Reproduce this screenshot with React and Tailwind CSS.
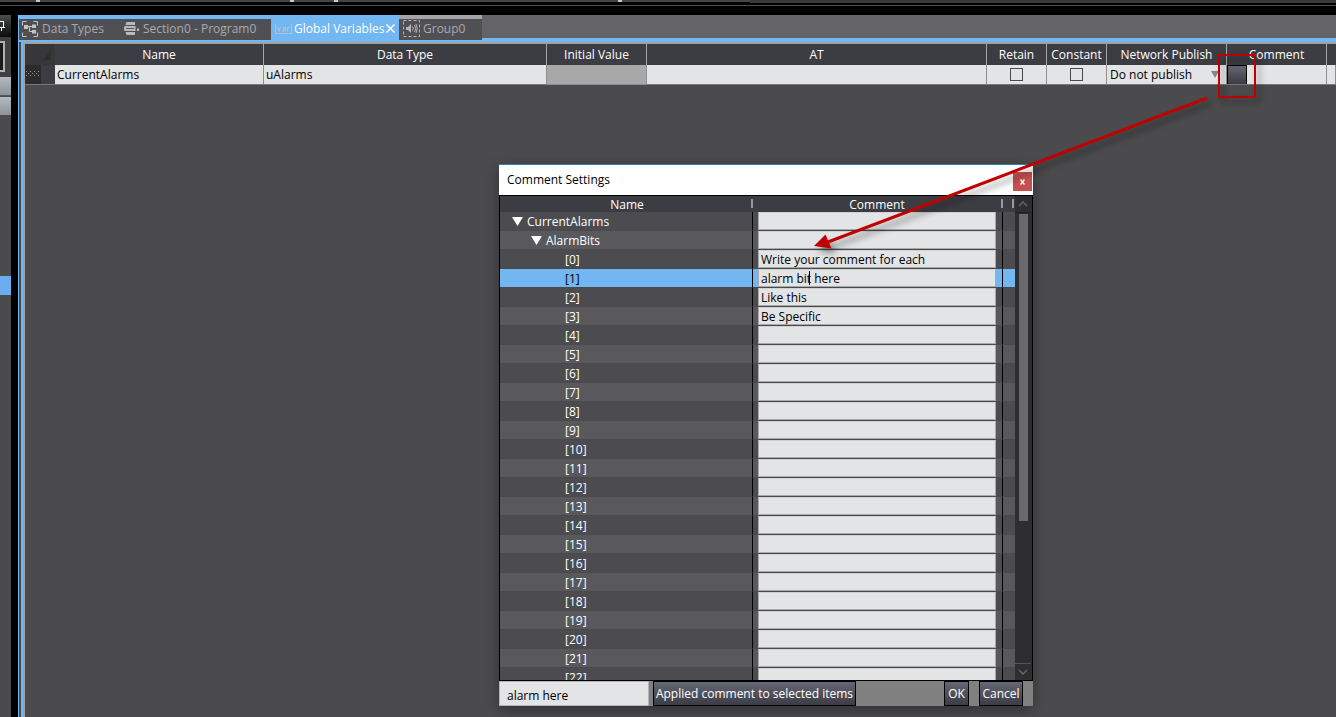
const gridCols = [
  ["Name", "w-[209px]"],
  ["Data Type", "w-[283px]"],
  ["Initial Value", "w-[100px]"],
  ["AT", "w-[340px]"],
  ["Retain", "w-[60px]"],
  ["Constant", "w-[60px]"],
  ["Network Publish", "w-[120px]"],
  ["Comment", "w-[100px]"],
];

const comments = ["Write your comment for each", "alarm bit here", "Like this", "Be Specific"];

const treeRows = [
  { name: "CurrentAlarms", level: 0, comment: "" },
  { name: "AlarmBits", level: 1, comment: "" },
  ...Array.from({ length: 23 }, (_, i) => ({
    name: `[${i}]`,
    level: 2,
    comment: comments[i] || "",
    selected: i === 1,
  })),
];

const indent = ["pl-3", "pl-[31px]", "pl-[65px]"];

function DataTypesIcon() {
  return (
    <svg width="16" height="16" viewBox="0 0 16 16" fill="none" stroke="#c4c4c6" aria-hidden="true">
      <path d="M.5 4.500V.5H4.500M11.500 .5h4V4.500M15.500 11.500v4H11.500M4.500 15.500H.5V11.500" />
      <path d="M5 5.500h5M7.500 5.500v5H10" />
      <path d="M2 4h4v4H2zM10 3.500h4v3.500h-4zM10 9h4v3.500h-4z" fill="#c4c4c6" stroke="none" />
    </svg>
  );
}

function SectionIcon() {
  return (
    <svg width="16" height="16" viewBox="0 0 16 16" aria-hidden="true">
      <path d="M3.500 1h8.500v3H2.500zM1.500 5h11v5h-11q-1-2.500 0-5zM2.500 11h9.500v3H3.500z" fill="#b9b9bb" />
      <path d="M3 7.500h8" stroke="#55555a" strokeWidth="1" />
      <path d="M14 7.500h2v2.500h-2z" fill="#b9b9bb" />
    </svg>
  );
}

function VarIcon() {
  return (
    <svg className="shrink-0" width="17" height="12" viewBox="0 0 17 12" fill="none" stroke="#b9c0c8" aria-hidden="true">
      <path d="M.5 1v10M16.500 1v10M1 10.500h15" />
      <path d="M2.500 4l1.500 4.500L5.500 4M8 4.500h2.500V8H8V6h2.500M12.500 8.500V4.500H15" />
    </svg>
  );
}

function GroupIcon() {
  return (
    <svg width="17" height="17" viewBox="0 0 17 17" fill="none" stroke="#b4b4b6" aria-hidden="true">
      <path d="M.5.5h16v16H.5z" strokeDasharray="3 2" />
      <path d="M3 7h2l3-3v9l-3-3H3z" fill="#b4b4b6" stroke="none" />
      <path d="M9.500 6.500q1.500 2 0 4M11.500 5q2.500 3.500 0 7M13 4q2.500 4.500 0 9" />
    </svg>
  );
}

function Toolbars() {
  return (
    <div className="flex h-[15px] flex-col bg-black">
      <div className="flex h-[3px] bg-[#39393c]">
        <div className="flex w-[750px] border-b border-black bg-[#454548]">
          <i className="ml-9 h-[2px] w-1 bg-[#c8c8c8]" />
          <i className="ml-[250px] h-[2px] w-1 bg-[#c8c8c8]" />
          <i className="ml-10 h-[2px] w-1 bg-[#c8c8c8]" />
          <i className="ml-[280px] h-[2px] w-1 bg-[#c8c8c8]" />
        </div>
      </div>
      <div className="mt-[2px] h-px bg-[#4d4f4e]" />
    </div>
  );
}

function SidePanel() {
  return (
    <aside className="flex w-[11px] shrink-0 flex-col bg-[#4b4b4e]">
      <div className="flex h-[22px] items-center bg-linear-to-b from-[#4b4d4e] to-[#0c0c0c]">
        <svg width="6" height="10" viewBox="0 0 6 10" fill="none" stroke="#fff" aria-hidden="true">
          <path d="M0 .5h4M3.500 0v6M0 6.500h5M1.500 6.500V10" />
        </svg>
      </div>
      <div className="h-10 bg-[#404042] pt-1">
        <div className="h-[31px] w-[5px] border-2 border-l-0 border-[#b0b0b0] bg-[#1b1b1b]" />
      </div>
      <div className="h-[19px] border-b border-[#55555a] bg-linear-to-b from-[#b3bac1] to-[#8b9299]" />
      <div className="mt-px h-[18px] bg-linear-to-b from-[#b3bac1] to-[#8b9299]" />
      <div className="mt-[161px] h-[19px] bg-[#6aaeef]" />
    </aside>
  );
}

const tab = "flex h-[25px] items-center border-t-4 pb-[2px] whitespace-nowrap ";
const idleTab = tab + "bg-[#505054] text-[#a9a9ac] ";

function Tabs() {
  return (
    <nav className="flex h-[27px] bg-linear-to-b from-[#646466] from-[23px] to-[#72b6f2] to-[23px]">
      <div className="flex h-[27px] bg-[#72b6f2] pl-px">
        <button className={idleTab + "w-[100px] gap-1 border-[#72b6f2] pl-[3px]"}>
          <DataTypesIcon />
          Data Types
        </button>
        <button className={idleTab + "w-[152px] gap-1 border-[#72b6f2] pl-1"}>
          <SectionIcon />
          Section0 - Program0
        </button>
        <button className={tab + "w-32 gap-[2px] border-[#72b6f2] pl-1 text-white"}>
          <VarIcon />
          Global Variables
          <svg className="shrink-0" width="9" height="9" viewBox="0 0 9 9" stroke="#fff" strokeWidth="1.500" aria-label="Close">
            <path d="M.5.5l8 8M8.500.5l-8 8" />
          </svg>
        </button>
      </div>
      <button className={idleTab + "w-[83px] gap-[3px] border-[#a4a4a6] pl-1"}>
        <GroupIcon />
        Group0
      </button>
    </nav>
  );
}

const cell = "border-r border-b border-[#8e8e90] border-b-[#77777a] bg-[#e3e4e6] p-0 ";

function VariablesTable() {
  return (
    <table className="w-full table-fixed border-separate border-spacing-0 overflow-hidden text-black">
      <thead>
        <tr className="h-[21px] bg-[#3c3c43] text-white">
          <th className="w-[30px] bg-[#37373a] p-0">
            <svg className="ml-auto" width="12" height="12" aria-hidden="true">
              <path d="M8 1v10H0z" fill="#2e2e30" />
            </svg>
          </th>
          {gridCols.map(([name, width]) => (
            <th key={name} className={"border-r border-[#a6a6a8] p-0 font-normal " + width}>
              {name}
            </th>
          ))}
          <th className="p-0" />
        </tr>
      </thead>
      <tbody>
        <tr className="h-5">
          <td className="border-b border-[#77777a] bg-[#3c3c43] p-0">
            <svg className="block bg-[#2b2b2d]" width="16" height="19" aria-hidden="true">
              <path d="M1 6.500h14M1 10.500h14" stroke="#9a9a9c" strokeDasharray="1 3" />
              <path d="M3 8.500h12" stroke="#9a9a9c" strokeDasharray="1 3" />
            </svg>
          </td>
          <td className={cell + "pl-[2px]"}>CurrentAlarms</td>
          <td className={cell + "pl-[2px]"}>uAlarms</td>
          <td className="border-r border-b border-[#8e8e90] bg-[#a8a8a8] p-0" />
          <td className={cell} />
          <td className={cell}>
            <input type="checkbox" aria-label="Retain" className="mx-auto block size-[13px] appearance-none border border-[#4a4a4c]" />
          </td>
          <td className={cell}>
            <input type="checkbox" aria-label="Constant" className="mx-auto block size-[13px] appearance-none border border-[#4a4a4c]" />
          </td>
          <td className={cell}>
            <div className="flex items-center pr-[7px] pl-[3px]">
              <select aria-label="Network Publish" className="h-[19px] min-w-0 flex-1 appearance-none bg-transparent">
                <option>Do not publish</option>
              </select>
              <svg width="8" height="7" aria-hidden="true">
                <path d="M0 0h8L4 7z" fill="#858587" />
              </svg>
            </div>
          </td>
          <td className={cell}>
            <button aria-label="Edit comment" className="block h-[19px] w-5 border border-b-0 border-black bg-linear-to-b from-[#656673] to-[#3b3c44]" />
          </td>
          <td className={cell} />
        </tr>
      </tbody>
    </table>
  );
}

function HeadMark() {
  return <i className="block h-[9px] w-[2px] bg-[#98989a]" />;
}

function TreeRow({ row, index }) {
  const tone = row.selected
    ? "bg-[#72b6f2] text-black"
    : index % 2
      ? "bg-[#58585d] text-white"
      : "bg-[#4c4c50] text-white";
  return (
    <tr className={"h-[19px] " + tone}>
      <td className="border-r border-b border-r-black border-b-[#4a4a4d] p-0">
        <div className={"flex h-[18px] items-center gap-1 pt-[2px] " + indent[row.level]}>
          {row.level < 2 && (
            <svg className="mb-[2px]" width="11" height="9" aria-hidden="true">
              <path d="M0 0h11L5.500 9z" fill="#fff" />
            </svg>
          )}
          {row.name}
        </div>
      </td>
      <td className="border-r border-b border-r-black border-b-[#4a4a4d] p-0 pr-1.5 pl-[5px]">
        <div className="relative">
          <input
            aria-label={"Comment for " + row.name}
            defaultValue={row.comment}
            className="block h-[18px] w-full border border-[#a9a9ab] border-t-[#d0d0d2] bg-[#e3e4e6] pl-[2px] text-black"
          />
          {row.selected && <i className="absolute top-[2px] left-[51px] h-[14px] w-px bg-black" />}
        </div>
      </td>
      <td className="border-b border-[#4a4a4d] p-0" />
    </tr>
  );
}

const dialogButton =
  "h-[25px] border border-black bg-linear-to-b from-[#666775] to-[#3b3c44] text-center whitespace-nowrap text-white ";

function CommentDialog() {
  return (
    <section
      role="dialog"
      aria-label="Comment Settings"
      className="absolute top-[164px] left-[499px] w-[534px] border-t border-[#2a80c4] shadow-[0_4px_14px_rgba(0,0,0,0.35)]"
    >
      <header className="flex h-[30px] items-center justify-between bg-white pr-px pl-2 text-black">
        <h2>Comment Settings</h2>
        <button aria-label="Close" className="mt-[3px] flex size-[19px] items-center justify-center bg-[#c75050]">
          <svg width="5" height="6" viewBox="0 0 5 6" stroke="#fff" strokeWidth="1.500" aria-hidden="true">
            <path d="M.5.5l4 5M4.500.5l-4 5" />
          </svg>
        </button>
      </header>
      <div className="flex h-[486px] overflow-hidden border border-black">
        <div className="flex-1 overflow-hidden">
          <table className="w-full table-fixed border-separate border-spacing-0">
            <thead>
              <tr className="h-4 bg-[#3c3c43] text-white">
                <th className="w-[253px] p-0 font-normal">
                  <div className="flex h-4 items-start">
                    <span className="flex-1 pt-px pl-[3px] leading-[15px]">Name</span>
                    <div className="pt-[3px]">
                      <HeadMark />
                    </div>
                  </div>
                </th>
                <th className="w-[250px] p-0 font-normal">
                  <div className="flex h-4 items-start">
                    <span className="flex-1 pt-px leading-[15px]">Comment</span>
                    <div className="pt-[3px]">
                      <HeadMark />
                    </div>
                  </div>
                </th>
                <th className="p-0">
                  <div className="flex h-4 justify-end pt-[3px] pr-px">
                    <HeadMark />
                  </div>
                </th>
              </tr>
            </thead>
            <tbody>
              {treeRows.map((row, i) => (
                <TreeRow key={row.name} row={row} index={i} />
              ))}
            </tbody>
          </table>
        </div>
        <div className="flex w-[17px] shrink-0 flex-col bg-[#2e2e30] pr-px">
          <button aria-label="Scroll up" className="flex h-[17px] items-center justify-center border-b border-[#1f1f21]">
            <svg width="10" height="6" fill="none" stroke="#666668" strokeWidth="1.500" aria-hidden="true">
              <path d="M1 5l4-4 4 4" />
            </svg>
          </button>
          <div className="flex-1">
            <div className="mx-auto mt-px h-[307px] w-[9px] bg-[#6a6a6c]" />
          </div>
          <button aria-label="Scroll down" className="flex h-[17px] items-center justify-center border-t border-[#555557]">
            <svg width="10" height="6" fill="none" stroke="#666668" strokeWidth="1.500" aria-hidden="true">
              <path d="M1 1l4 4 4-4" />
            </svg>
          </button>
        </div>
      </div>
      <footer className="flex h-[25px] bg-[#808080]">
        <input
          aria-label="Comment text"
          defaultValue="alarm here"
          className="h-[25px] w-[150px] border border-[#b5b5b7] bg-[#e3e4e6] pt-1 pl-[7px] text-black"
        />
        <button className={dialogButton + "ml-1 w-[203px]"}>Applied comment to selected items</button>
        <button className={dialogButton + "ml-auto w-[25px]"}>OK</button>
        <button className={dialogButton + "mr-[10px] ml-[10px] w-11"}>Cancel</button>
      </footer>
    </section>
  );
}

function Annotation() {
  return (
    <svg
      className="pointer-events-none absolute top-[40px] left-[800px] drop-shadow-[4px_5px_3px_rgba(0,0,0,0.4)]"
      width="470"
      height="220"
      viewBox="800 40 470 220"
      fill="none"
      stroke="#c00000"
      aria-hidden="true"
    >
      <path d="M1219 55h36v42h-36z" strokeWidth="2" />
      <path d="M1207 98L828 242" strokeWidth="3" />
      <path d="M814 246L825.500 234.500L831.500 248.500z" fill="#c00000" stroke="none" />
    </svg>
  );
}

export default function App() {
  return (
    <div className="relative flex min-h-screen flex-col overflow-hidden bg-black font-['Open_Sans','Noto_Sans',sans-serif] text-[12px] leading-4">
      <Toolbars />
      <div className="flex flex-1">
        <SidePanel />
        <main className="ml-[7px] flex min-w-0 flex-1 flex-col">
          <Tabs />
          <div className="flex flex-1 border-l border-[#72b6f2] bg-[#4b4b4e] pl-[2px]">
            <div className="min-w-0 flex-1 border-l-2 border-[#72b6f2]">
              <div className="h-full border-t-2 border-l-2 border-[#a0a0a0]">
                <VariablesTable />
              </div>
            </div>
          </div>
        </main>
      </div>
      <CommentDialog />
      <Annotation />
    </div>
  );
}
